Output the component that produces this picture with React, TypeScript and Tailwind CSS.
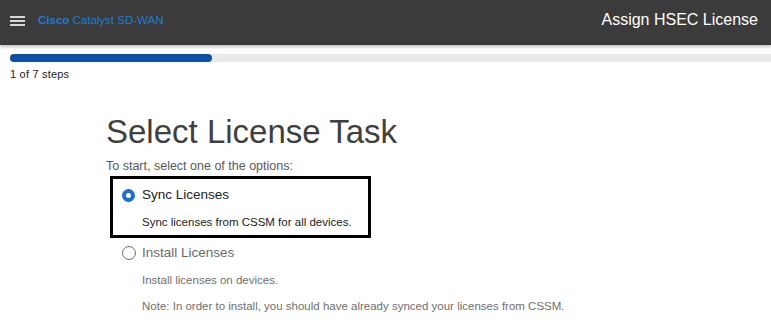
import React from "react";

export default function App() {
  return (
    <div className="w-[771px] h-[324px] overflow-hidden bg-white" style={{ fontFamily: "'Liberation Sans', Arial, sans-serif" }}>
      <header className="h-[45px] bg-[#3b3b3b] flex items-center shadow-[0_2px_3px_rgba(0,0,0,0.25)] relative">
        <div className="ml-[10px] w-[15px] flex flex-col gap-[2px] mt-[-4px]">
          <span className="block h-[2px] bg-[#d8d8d8]" />
          <span className="block h-[2px] bg-[#d8d8d8]" />
          <span className="block h-[2px] bg-[#d8d8d8]" />
        </div>
        <div className="ml-[13px] text-[11.5px] text-[#1e7bd8] mt-[-4px]">
          <span className="font-bold">Cisco</span> Catalyst SD-WAN
        </div>
        <div className="ml-auto mr-[13px] text-[16px] text-white mt-[-6px]">Assign HSEC License</div>
      </header>
      <div className="pl-[10px] pt-[9px]">
        <div className="h-[8px] bg-[#e8e9eb] rounded-l-full">
          <div className="h-[8px] w-[202px] bg-[#0c4fa8] rounded-full" />
        </div>
      </div>
      <div className="pl-[10px] mt-[5px] text-[11px] leading-[14px] text-[#222] tracking-[0.2px]">1 of 7 steps</div>
      <div className="pl-[106px]">
        <h1 className="mt-[31px] text-[33px] leading-[40px] text-[#3f3f3f]">Select License Task</h1>
        <p className="mt-[6px] text-[12.5px] leading-[16px] text-[#58585b]">To start, select one of the options:</p>
        <div className="mt-[2px] ml-[4px] w-[261px] h-[62px] border-[3px] border-black">
          <div className="flex items-center pl-[9px] pt-[8px]">
            <span className="w-[13px] h-[13px] rounded-full bg-[#1a6fd0] flex items-center justify-center">
              <span className="w-[5px] h-[5px] rounded-full bg-white" />
            </span>
            <span className="ml-[7px] text-[13.5px] leading-[16px] text-[#222]">Sync Licenses</span>
          </div>
          <div className="pl-[29px] mt-[11px] text-[11.5px] leading-[16px] text-[#222]">Sync licenses from CSSM for all devices.</div>
        </div>
        <div className="flex items-center pl-[16px] mt-[7px]">
          <span className="w-[14px] h-[14px] rounded-full border border-[#6b6b6b] bg-white" />
          <span className="ml-[6px] text-[13.5px] leading-[16px] text-[#6b6b6b]">Install Licenses</span>
        </div>
        <div className="pl-[36px] mt-[11px] text-[11.5px] leading-[16px] text-[#6f6f6f]">Install licenses on devices.</div>
        <div className="pl-[36px] mt-[10px] text-[11.5px] leading-[16px] text-[#6f6f6f]">Note: In order to install, you should have already synced your licenses from CSSM.</div>
      </div>
    </div>
  );
}
